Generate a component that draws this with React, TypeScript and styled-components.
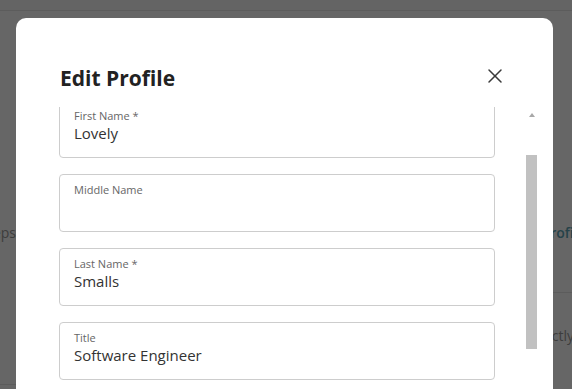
import React, { useLayoutEffect, useRef, useState } from "react";
import styled, { createGlobalStyle } from "styled-components";
import { X } from "lucide-react";

const GlobalStyle = createGlobalStyle`
  html, body {
    margin: 0;
    padding: 0;
    background: #fff;
    font-family: "Open Sans", "Liberation Sans", sans-serif;
  }
  * { box-sizing: border-box; }
`;

const Page = styled.div`
  width: 572px;
  height: 389px;
  overflow: hidden;
  position: relative;
  background: #fff;
`;

const TopBar = styled.div`
  height: 11px;
  background: #fbfbfb;
  border-bottom: 1px solid #e6e6e6;
`;

const Content = styled.div`
  display: grid;
  grid-template-columns: 16px 1fr;
  padding-top: 212px;
`;

const Side = styled.div`
  display: flex;
  flex-direction: column;
  border-bottom: 1px solid #e6e6e6;
  height: 162px;
  overflow: hidden;
`;

const SideText = styled.div`
  display: flex;
  justify-content: flex-end;
  white-space: nowrap;
  font-size: 14px;
  line-height: 20px;
  color: #9a9a9a;
`;

const Main = styled.div`
  display: flex;
  flex-direction: column;
`;

const MainRow = styled.div<{ $h: number; $indent: number; $line?: boolean }>`
  display: flex;
  height: ${({ $h }) => $h}px;
  padding-left: ${({ $indent }) => $indent}px;
  border-bottom: ${({ $line }) => ($line ? "1px solid #e6e6e6" : "none")};
  white-space: nowrap;
  overflow: hidden;
`;

const LinkText = styled.span`
  font-size: 14px;
  line-height: 20px;
  font-weight: 600;
  color: #5ea6b6;
`;

const BodyText = styled.span`
  font-size: 14px;
  line-height: 20px;
  color: #9a9a9a;
  margin-top: 33px;
`;

const Overlay = styled.div`
  position: absolute;
  inset: 0;
  background: rgba(0, 0, 0, 0.6);
  padding: 18px 19px 0 16px;
`;

const Modal = styled.div`
  width: 537px;
  height: 440px;
  background: #fff;
  border-radius: 10px;
  display: flex;
  flex-direction: column;
  padding: 46px 46px 0 43px;
`;

const Header = styled.div`
  display: flex;
  justify-content: space-between;
  align-items: flex-start;
  padding-left: 1px;
`;

const Title = styled.h2`
  margin: 0;
  font-size: 21px;
  line-height: 28px;
  font-weight: 700;
  color: #222;
`;

const CloseButton = styled.button`
  border: none;
  background: none;
  padding: 0;
  width: 24px;
  height: 24px;
  display: flex;
  color: #3a3a3a;
  cursor: pointer;
`;

const ScrollArea = styled.div`
  margin-top: 15px;
  display: flex;
  width: 480px;
  height: 300px;
`;

const Scroller = styled.div`
  width: 465px;
  height: 100%;
  overflow-y: auto;
  padding-right: 29px;
  scrollbar-width: none;

  &::-webkit-scrollbar {
    display: none;
  }
`;

const Track = styled.div`
  width: 15px;
  height: 100%;
  display: flex;
  flex-direction: column;
  background: #fff;
`;

const ArrowButton = styled.div<{ $down?: boolean }>`
  height: 15px;
  display: flex;
  align-items: center;
  justify-content: center;

  &::before {
    content: "";
    width: 0;
    height: 0;
    border-left: 3.5px solid transparent;
    border-right: 3.5px solid transparent;
    ${({ $down }) =>
      $down ? "border-top: 4px solid #a8a8a8;" : "border-bottom: 4px solid #a8a8a8;"}
  }
`;

const TrackBody = styled.div`
  flex: 1;
  display: flex;
  flex-direction: column;
`;

const Thumb = styled.div`
  margin: 0 2px;
  background: #c1c1c1;
`;

const Form = styled.div`
  display: flex;
  flex-direction: column;
  gap: 16px;
  padding: 44px 0 20px;
`;

const Field = styled.label`
  display: flex;
  flex-direction: column;
  height: 58px;
  border: 1px solid #cdcdcd;
  border-radius: 4px;
  padding: 8px 14px 0;
`;

const FieldLabel = styled.span`
  font-size: 11px;
  line-height: 14px;
  color: #666;
`;

const FieldInput = styled.input`
  border: none;
  outline: none;
  padding: 0;
  margin: 0;
  height: 20px;
  font-family: "Open Sans", "Liberation Sans", sans-serif;
  font-size: 15px;
  line-height: 20px;
  color: #333;
  background: transparent;
`;

const fields = [
  { label: "First Name *", value: "Lovely" },
  { label: "Middle Name", value: "" },
  { label: "Last Name *", value: "Smalls" },
  { label: "Title", value: "Software Engineer" },
  { label: "Email *", value: "lovely.smalls@example.com" },
];

export default function App() {
  const scrollRef = useRef<HTMLDivElement>(null);
  const [thumb, setThumb] = useState({ top: 0, len: 0 });

  const measure = () => {
    const el = scrollRef.current;
    if (!el) return;
    const trackLen = el.clientHeight - 30;
    const total = el.scrollHeight;
    setThumb({
      top: (trackLen * el.scrollTop) / total,
      len: (trackLen * el.clientHeight) / total,
    });
  };

  useLayoutEffect(() => {
    if (scrollRef.current) scrollRef.current.scrollTop = 51;
    measure();
  }, []);

  return (
    <>
      <GlobalStyle />
      <Page>
        <TopBar />
        <Content>
          <Side>
            <SideText>Next steps</SideText>
          </Side>
          <Main>
            <MainRow $h={70} $indent={496} $line>
              <LinkText>Edit Profile</LinkText>
            </MainRow>
            <MainRow $h={92} $indent={510}>
              <BodyText>directly with</BodyText>
            </MainRow>
          </Main>
        </Content>
        <Overlay>
          <Modal role="dialog" aria-label="Edit Profile">
            <Header>
              <Title>Edit Profile</Title>
              <CloseButton aria-label="Close">
                <X size={24} strokeWidth={1.5} />
              </CloseButton>
            </Header>
            <ScrollArea>
              <Scroller ref={scrollRef} onScroll={measure}>
                <Form>
                  {fields.map((f) => (
                    <Field key={f.label}>
                      <FieldLabel>{f.label}</FieldLabel>
                      <FieldInput readOnly defaultValue={f.value} />
                    </Field>
                  ))}
                </Form>
              </Scroller>
              <Track aria-hidden>
                <ArrowButton />
                <TrackBody>
                  <Thumb style={{ marginTop: thumb.top, height: thumb.len }} />
                </TrackBody>
                <ArrowButton $down />
              </Track>
            </ScrollArea>
          </Modal>
        </Overlay>
      </Page>
    </>
  );
}
